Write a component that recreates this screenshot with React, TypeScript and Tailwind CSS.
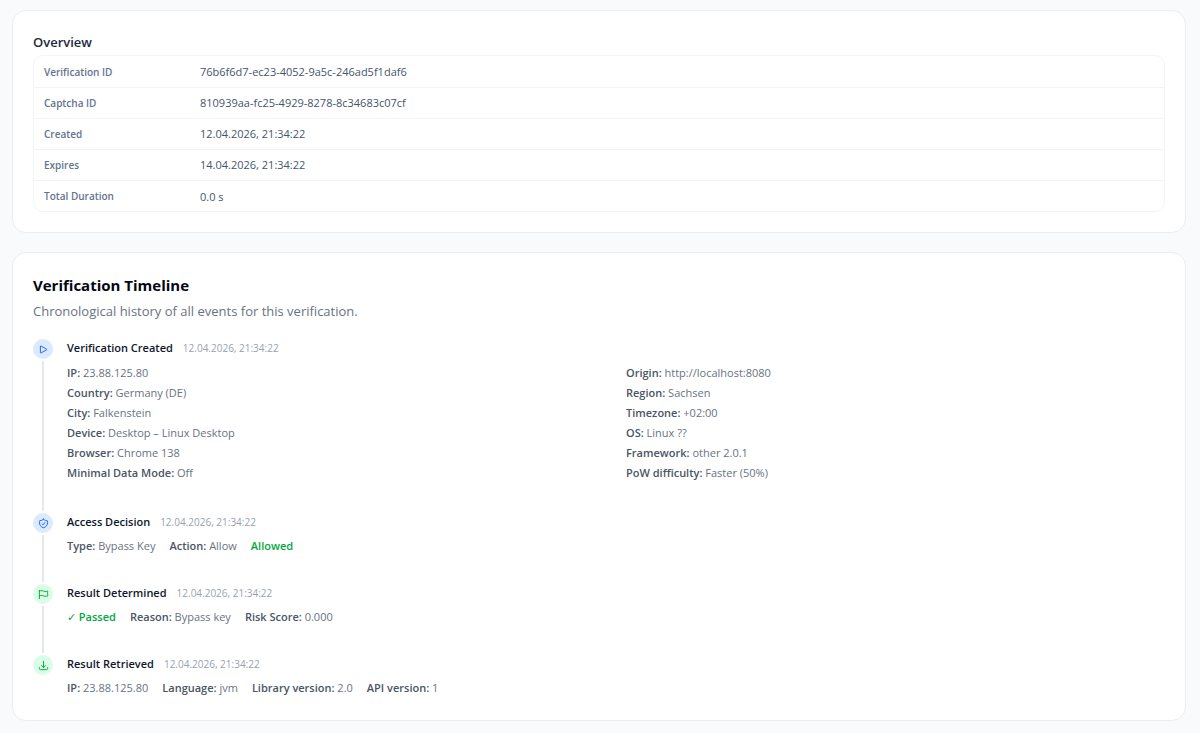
import React from 'react';
import {
  HiOutlineArrowDownTray,
  HiOutlineFlag,
  HiOutlinePlay,
  HiOutlineShieldCheck,
} from 'react-icons/hi2';

interface Detail {
  label: string;
  value: string;
}

interface TimelineItemProps {
  icon: React.ReactNode;
  tone: 'blue' | 'green';
  title: string;
  time: string;
  last?: boolean;
  children: React.ReactNode;
}

const overview: Detail[] = [
  { label: 'Verification ID', value: '76b6f6d7-ec23-4052-9a5c-246ad5f1daf6' },
  { label: 'Captcha ID', value: '810939aa-fc25-4929-8278-8c34683c07cf' },
  { label: 'Created', value: '12.04.2026, 21:34:22' },
  { label: 'Expires', value: '14.04.2026, 21:34:22' },
  { label: 'Total Duration', value: '0.0 s' },
];

const createdDetails: Detail[] = [
  { label: 'IP', value: '23.88.125.80' },
  { label: 'Origin', value: 'http://localhost:8080' },
  { label: 'Country', value: 'Germany (DE)' },
  { label: 'Region', value: 'Sachsen' },
  { label: 'City', value: 'Falkenstein' },
  { label: 'Timezone', value: '+02:00' },
  { label: 'Device', value: 'Desktop – Linux Desktop' },
  { label: 'OS', value: 'Linux ??' },
  { label: 'Browser', value: 'Chrome 138' },
  { label: 'Framework', value: 'other 2.0.1' },
  { label: 'Minimal Data Mode', value: 'Off' },
  { label: 'PoW difficulty', value: 'Faster (50%)' },
];

const Card: React.FC<{ children: React.ReactNode }> = ({ children }) => (
  <section className="rounded-[14px] border border-[#e9eef5] bg-white p-5">{children}</section>
);

const Field: React.FC<Detail> = ({ label, value }) => (
  <div>
    <span className="font-semibold text-gray-600">{label}:</span> {value}
  </div>
);

const FieldRow: React.FC<{ children: React.ReactNode }> = ({ children }) => (
  <div className="flex flex-wrap gap-x-3.5">{children}</div>
);

const TimelineItem: React.FC<TimelineItemProps> = ({ icon, tone, title, time, last, children }) => (
  <li className="flex gap-3.5">
    <div className="flex flex-col items-center">
      <div
        className={`flex size-5 items-center justify-center rounded-full ${
          tone === 'blue' ? 'bg-blue-100 text-blue-600' : 'bg-green-100 text-green-600'
        }`}
      >
        {icon}
      </div>
      {!last && <div className="my-0.5 w-0.5 flex-1 bg-gray-200" />}
    </div>
    <div className={`min-w-0 flex-1 ${last ? 'pb-0.5' : 'pb-7'}`}>
      <div className="flex items-baseline gap-2.5 leading-[18px]">
        <h3 className="text-[11px] font-semibold text-slate-900">{title}</h3>
        <time className="text-[10px] text-gray-400">{time}</time>
      </div>
      <div className="mt-[5px] text-[11px] leading-5 text-gray-500">{children}</div>
    </div>
  </li>
);

const App: React.FC = () => {
  return (
    <main className="flex min-h-screen flex-col gap-[19px] bg-[#f9fafc] pt-2.5 pr-3.5 pb-3 pl-3 font-['Open_Sans','Noto_Sans',sans-serif]">
      <Card>
        <h2 className="mb-0.5 text-[13px] leading-[22px] font-semibold text-slate-800">Overview</h2>
        <div className="overflow-hidden rounded-[10px] border border-slate-100">
          <table className="w-full text-left">
            <tbody className="divide-y divide-slate-100">
              {overview.map((row) => (
                <tr key={row.label} className="h-[31px]">
                  <th scope="row" className="w-[156px] px-2.5 pt-0.5 text-[10px] font-semibold text-slate-500">
                    {row.label}
                  </th>
                  <td className="px-2.5 pt-0.5 text-[11px] text-slate-600">{row.value}</td>
                </tr>
              ))}
            </tbody>
          </table>
        </div>
      </Card>

      <Card>
        <h2 className="mb-0.5 text-[15px] leading-6 font-bold text-gray-950">Verification Timeline</h2>
        <p className="text-[13px] leading-6 text-gray-500">
          Chronological history of all events for this verification.
        </p>
        <ol className="mt-4">
          <TimelineItem
            icon={<HiOutlinePlay className="size-[11px]" strokeWidth={2} />}
            tone="blue"
            title="Verification Created"
            time="12.04.2026, 21:34:22"
          >
            <div className="grid grid-cols-2 gap-x-5 pt-px pb-0.5">
              {createdDetails.map((detail) => (
                <Field key={detail.label} {...detail} />
              ))}
            </div>
          </TimelineItem>
          <TimelineItem
            icon={<HiOutlineShieldCheck className="size-[11px]" strokeWidth={2} />}
            tone="blue"
            title="Access Decision"
            time="12.04.2026, 21:34:22"
          >
            <FieldRow>
              <Field label="Type" value="Bypass Key" />
              <Field label="Action" value="Allow" />
              <span className="font-semibold text-green-600">Allowed</span>
            </FieldRow>
          </TimelineItem>
          <TimelineItem
            icon={<HiOutlineFlag className="size-[11px]" strokeWidth={2} />}
            tone="green"
            title="Result Determined"
            time="12.04.2026, 21:34:22"
          >
            <FieldRow>
              <span className="font-semibold text-green-600">
                <span className="font-normal">✓</span> Passed
              </span>
              <Field label="Reason" value="Bypass key" />
              <Field label="Risk Score" value="0.000" />
            </FieldRow>
          </TimelineItem>
          <TimelineItem
            icon={<HiOutlineArrowDownTray className="size-[11px]" strokeWidth={2} />}
            tone="green"
            title="Result Retrieved"
            time="12.04.2026, 21:34:22"
            last
          >
            <FieldRow>
              <Field label="IP" value="23.88.125.80" />
              <Field label="Language" value="jvm" />
              <Field label="Library version" value="2.0" />
              <Field label="API version" value="1" />
            </FieldRow>
          </TimelineItem>
        </ol>
      </Card>
    </main>
  );
};

export default App;
